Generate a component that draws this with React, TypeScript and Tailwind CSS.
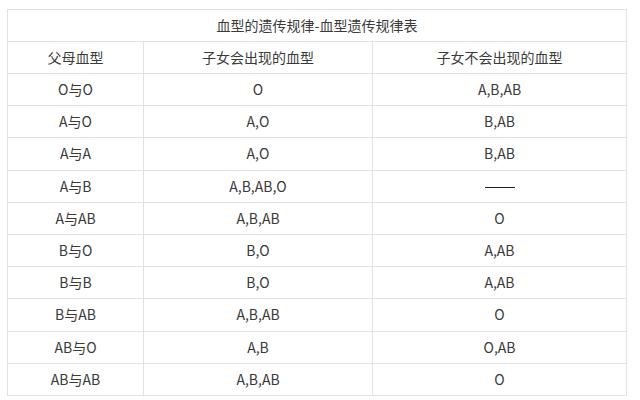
const rows: [string, string, string][] = [
  ['O与O', 'O', 'A,B,AB'],
  ['A与O', 'A,O', 'B,AB'],
  ['A与A', 'A,O', 'B,AB'],
  ['A与B', 'A,B,AB,O', '——'],
  ['A与AB', 'A,B,AB', 'O'],
  ['B与O', 'B,O', 'A,AB'],
  ['B与B', 'B,O', 'A,AB'],
  ['B与AB', 'A,B,AB', 'O'],
  ['AB与O', 'A,B', 'O,AB'],
  ['AB与AB', 'A,B,AB', 'O'],
];

const App = () => {
  return (
    <div
      className="w-[640px] h-[400px] bg-white pl-[7px] pt-[9px] text-[#3a3a3a] text-[14px]"
      style={{ fontFamily: '"Noto Sans CJK SC", "Noto Sans", sans-serif' }}
    >
      <table className="w-[619px] border-collapse table-fixed">
        <colgroup>
          <col className="w-[136px]" />
          <col className="w-[229px]" />
          <col className="w-[254px]" />
        </colgroup>
        <tbody>
          <tr className="h-[32px]">
            <td colSpan={3} className="border border-[#e2e2e2] text-center">
              血型的遗传规律-血型遗传规律表
            </td>
          </tr>
          <tr className="h-[32px]">
            <td className="border border-[#e2e2e2] text-center">父母血型</td>
            <td className="border border-[#e2e2e2] text-center">子女会出现的血型</td>
            <td className="border border-[#e2e2e2] text-center">子女不会出现的血型</td>
          </tr>
          {rows.map(([parents, can, cannot]) => (
            <tr key={parents} className="h-[32.2px]">
              <td className="border border-[#e2e2e2] text-center">{parents}</td>
              <td className="border border-[#e2e2e2] text-center">{can}</td>
              <td className="border border-[#e2e2e2] text-center">
                {cannot === '——' ? (
                  <span className="inline-block w-[30px] h-px bg-[#222] align-middle" />
                ) : (
                  cannot
                )}
              </td>
            </tr>
          ))}
        </tbody>
      </table>
    </div>
  );
};

export default App;
